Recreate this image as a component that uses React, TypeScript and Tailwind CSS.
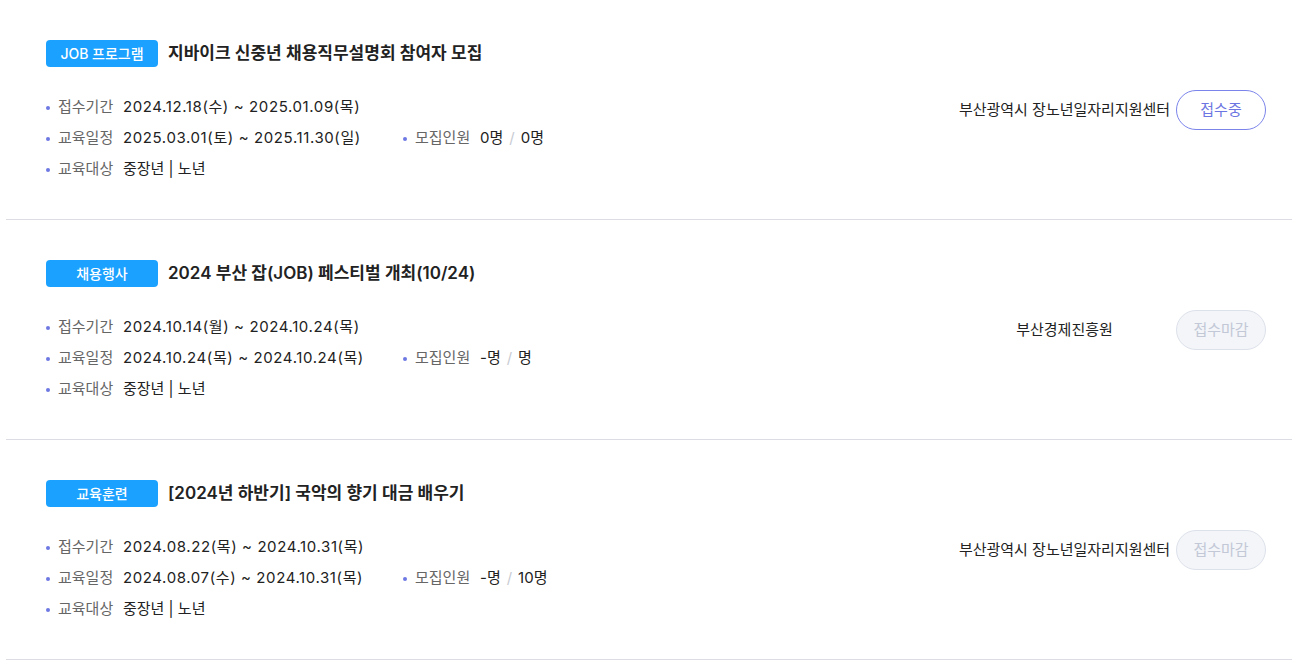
type Item = {
  category: string;
  title: string;
  apply: string;
  edu: string;
  recruit: [string, string];
  target: string;
  org: string;
  open: boolean;
};

const items: Item[] = [
  {
    category: 'JOB 프로그램',
    title: '지바이크 신중년 채용직무설명회 참여자 모집',
    apply: '2024.12.18(수) ~ 2025.01.09(목)',
    edu: '2025.03.01(토) ~ 2025.11.30(일)',
    recruit: ['0명', '0명'],
    target: '중장년 | 노년',
    org: '부산광역시 장노년일자리지원센터',
    open: true,
  },
  {
    category: '채용행사',
    title: '2024 부산 잡(JOB) 페스티벌 개최(10/24)',
    apply: '2024.10.14(월) ~ 2024.10.24(목)',
    edu: '2024.10.24(목) ~ 2024.10.24(목)',
    recruit: ['-명', '명'],
    target: '중장년 | 노년',
    org: '부산경제진흥원',
    open: false,
  },
  {
    category: '교육훈련',
    title: '[2024년 하반기] 국악의 향기 대금 배우기',
    apply: '2024.08.22(목) ~ 2024.10.31(목)',
    edu: '2024.08.07(수) ~ 2024.10.31(목)',
    recruit: ['-명', '10명'],
    target: '중장년 | 노년',
    org: '부산광역시 장노년일자리지원센터',
    open: false,
  },
];

function Info({ label, children, wide }: { label: string; children: React.ReactNode; wide?: boolean }) {
  return (
    <div className="flex h-[31px] items-center">
      <span className="mr-[8px] h-[4px] w-[4px] rounded-full bg-[#6d78e3]" />
      <span className="w-[65px] text-[#666]">{label}</span>
      <span className={wide ? 'tracking-[0.6px] text-[#222]' : 'text-[#222]'}>{children}</span>
    </div>
  );
}

function Card({ item }: { item: Item }) {
  return (
    <div className="ml-[6px] border-b border-[#dcdde4] pt-[40px] pb-[34px] pl-[40px] pr-[26px]">
      <div className="flex items-center">
        <span className="flex h-[27px] w-[112px] items-center justify-center rounded-[4px] bg-[#1ba1ff] text-[14px] font-medium text-white">
          {item.category}
        </span>
        <h3 className="ml-[10px] text-[17px] font-semibold leading-[27px] text-[#222]">{item.title}</h3>
      </div>
      <div className="mt-[23px] flex text-[15px]">
        <div className="mt-[2px] flex-1">
          <Info label="접수기간" wide>
            {item.apply}
          </Info>
          <div className="flex">
            <div className="w-[357px]">
              <Info label="교육일정" wide>
                {item.edu}
              </Info>
            </div>
            <Info label="모집인원">
              {item.recruit[0]}
              <span className="mx-[6px] text-[#c8cbd3]">/</span>
              {item.recruit[1]}
            </Info>
          </div>
          <Info label="교육대상">{item.target}</Info>
        </div>
        <div className="flex h-[40px] items-center">
          <span className="w-[215px] text-center text-[15px] text-[#222]">{item.org}</span>
          <button
            type="button"
            className={
              item.open
                ? 'ml-[4px] h-[40px] w-[90px] rounded-full border border-[#7b84ea] bg-white text-[15px] text-[#6c76e2]'
                : 'ml-[4px] h-[40px] w-[90px] rounded-full border border-[#dde1ea] bg-[#f3f5f9] text-[15px] text-[#c2c8d6]'
            }
          >
            {item.open ? '접수중' : '접수마감'}
          </button>
        </div>
      </div>
    </div>
  );
}

export default function App() {
  return (
    <div
      className="min-h-screen bg-white"
      style={{ fontFamily: 'Inter, "Noto Sans CJK KR", sans-serif' }}
    >
      {items.map((item) => (
        <Card key={item.title} item={item} />
      ))}
    </div>
  );
}
